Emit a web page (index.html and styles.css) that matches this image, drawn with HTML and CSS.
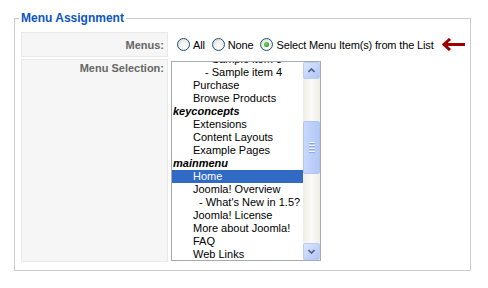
FILE: index.html
```html
<!DOCTYPE html>
<html lang="en">
<head>
    <meta charset="UTF-8">
    <title>Menu Assignment</title>
    <link rel="stylesheet" href="styles.css">
</head>
<body>
    <div class="wrap">
        <fieldset class="adminform">
            <legend>Menu Assignment</legend>
            <table class="paramlist">
                <tr>
                    <td class="key">Menus:</td>
                    <td class="value">
                        <div class="radios">
                            <label><span class="radio"></span>All</label>
                            <label><span class="radio"></span>None</label>
                            <label><span class="radio checked"></span>Select Menu Item(s) from the List</label>
                            <svg class="arrow" width="24" height="13" viewBox="0 0 24 13">
                                <path d="M8 1 L2 6.5 L8 12" fill="none" stroke="#990000" stroke-width="3"/>
                                <path d="M3 6.5 H23" stroke="#990000" stroke-width="3"/>
                            </svg>
                        </div>
                    </td>
                </tr>
                <tr>
                    <td class="key top">Menu Selection:</td>
                    <td class="value top">
                        <div class="listbox">
                            <div class="options">
                                <ul>
                                    <li class="l3">- Sample item 3</li>
                                    <li class="l3">- Sample item 4</li>
                                    <li class="l1">Purchase</li>
                                    <li class="l1">Browse Products</li>
                                    <li class="group">keyconcepts</li>
                                    <li class="l1">Extensions</li>
                                    <li class="l1">Content Layouts</li>
                                    <li class="l1">Example Pages</li>
                                    <li class="group">mainmenu</li>
                                    <li class="l1 selected">Home</li>
                                    <li class="l1">Joomla! Overview</li>
                                    <li class="l2">- What's New in 1.5?</li>
                                    <li class="l1">Joomla! License</li>
                                    <li class="l1">More about Joomla!</li>
                                    <li class="l1">FAQ</li>
                                    <li class="l1">Web Links</li>
                                </ul>
                            </div>
                            <div class="scrollbar">
                                <div class="sb-btn">
                                    <svg width="7" height="5" viewBox="0 0 7 5"><path d="M0.5 4 L3.5 1 L6.5 4" fill="none" stroke="#4d6185" stroke-width="1.6"/></svg>
                                </div>
                                <div class="sb-track">
                                    <div class="sb-thumb"><span></span><span></span><span></span><span></span></div>
                                </div>
                                <div class="sb-btn">
                                    <svg width="7" height="5" viewBox="0 0 7 5"><path d="M0.5 1 L3.5 4 L6.5 1" fill="none" stroke="#4d6185" stroke-width="1.6"/></svg>
                                </div>
                            </div>
                        </div>
                    </td>
                </tr>
            </table>
        </fieldset>
    </div>
</body>
</html>
```

FILE: styles.css
```css
body {
    margin: 0;
    background: #fff;
    font-family: 'Liberation Sans', Arial, sans-serif;
    font-size: 11px;
    color: #000;
}
.wrap {
    padding: 11px 0 0 14px;
}
.adminform {
    width: 457px;
    box-sizing: border-box;
    margin: 0;
    padding: 5px 0 6px 4px;
    border: 1px solid #cccccc;
}
.adminform legend {
    padding: 0 2px;
    font-size: 12px;
    line-height: 14px;
    font-weight: bold;
    color: #0b55c4;
}
.paramlist {
    border-spacing: 2px;
    border-collapse: separate;
}
.paramlist td {
    padding: 0;
}
.key {
    width: 142px;
    min-width: 142px;
    height: 23px;
    padding: 0 3px 0 0 !important;
    background: #f6f6f6;
    border: 1px solid #e9e9e9;
    text-align: right;
    font-weight: bold;
    color: #666;
    vertical-align: middle;
    white-space: nowrap;
}
.key.top {
    vertical-align: top;
    height: 203px;
    box-sizing: border-box;
    padding-top: 1px !important;
    line-height: 14px;
}
.value {
    vertical-align: middle;
}
.value.top {
    vertical-align: top;
    padding: 2px 0 0 1px !important;
}
.radios {
    display: flex;
    align-items: center;
    padding-left: 7px;
    white-space: nowrap;
    letter-spacing: -0.15px;
}
.radios label {
    display: flex;
    align-items: center;
    gap: 3px;
    margin-right: 7px;
}
.radio {
    flex: none;
    width: 11px;
    height: 11px;
    border: 1px solid #1c5180;
    border-radius: 50%;
    background: radial-gradient(circle at 65% 65%, #ffffff 0%, #f4f3ee 45%, #d2cfc4 100%);
    position: relative;
}
.radio.checked::after {
    content: "";
    position: absolute;
    left: 3px;
    top: 3px;
    width: 5px;
    height: 5px;
    border-radius: 50%;
    background: radial-gradient(circle at 40% 40%, #7be07b 0%, #21a121 70%);
}
.arrow {
    flex: none;
    margin-left: 1px;
    display: block;
}
.listbox {
    display: flex;
    width: 150px;
    height: 200px;
    box-sizing: border-box;
    border: 1px solid #a5acb2;
    background: #fff;
}
.options {
    flex: 1;
    overflow: hidden;
}
.options ul {
    list-style: none;
    margin: -9px 0 0 0;
    padding: 0;
}
.options li {
    height: 13px;
    line-height: 13px;
    white-space: nowrap;
}
.options .group {
    font-weight: bold;
    font-style: italic;
    padding-left: 1px;
}
.options .l1 {
    padding-left: 21px;
}
.options .l2 {
    padding-left: 27px;
}
.options .l3 {
    padding-left: 33px;
}
.options .selected {
    background: #316ac5;
    color: #fff;
}
.scrollbar {
    width: 17px;
    display: flex;
    flex-direction: column;
    background: linear-gradient(90deg, #eeede5 0%, #fbfaf6 50%, #eeede5 100%);
}
.sb-btn {
    height: 17px;
    box-sizing: border-box;
    border: 1px solid #b9cdf8;
    border-radius: 2px;
    background: linear-gradient(135deg, #dbe5fd 0%, #c1d2fa 60%, #b1c6f7 100%);
    display: flex;
    align-items: center;
    justify-content: center;
}
.sb-track {
    flex: 1;
    padding-top: 42px;
}
.sb-thumb {
    height: 53px;
    box-sizing: border-box;
    border: 1px solid #b0c4f3;
    border-radius: 2px;
    background: linear-gradient(90deg, #c9d8fc 0%, #bccffb 50%, #b3c8f7 100%);
    display: flex;
    flex-direction: column;
    align-items: center;
    justify-content: center;
    gap: 1px;
}
.sb-thumb span {
    width: 6px;
    height: 1px;
    background: #eef3fe;
    border-bottom: 1px solid #8fa7e0;
}
```
